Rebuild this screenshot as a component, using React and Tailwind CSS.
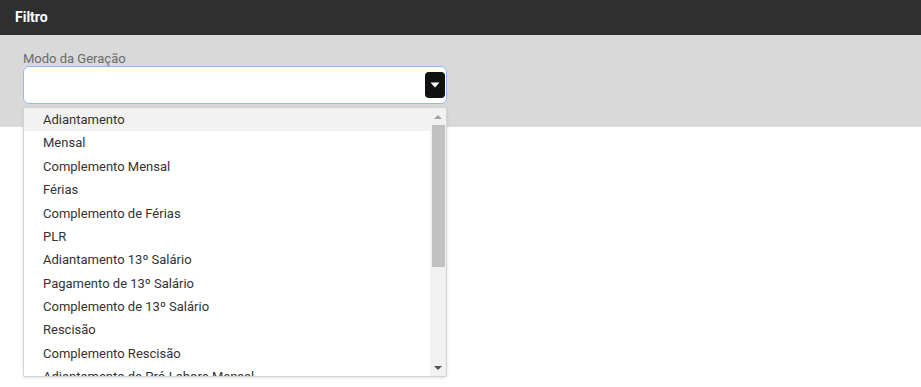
import React from 'react';

const options = [
  'Adiantamento',
  'Mensal',
  'Complemento Mensal',
  'Férias',
  'Complemento de Férias',
  'PLR',
  'Adiantamento 13º Salário',
  'Pagamento de 13º Salário',
  'Complemento de 13º Salário',
  'Rescisão',
  'Complemento Rescisão',
  'Adiantamento de Pró-Labore Mensal',
];

function App() {
  return (
    <div className="min-h-[387px] bg-white font-['Roboto',sans-serif]">
      {/* Cabeçalho */}
      <div className="h-[35px] bg-[#2f2f2f] px-[15px] flex items-center">
        <span className="text-[14px] font-bold text-white">Filtro</span>
      </div>

      {/* Filtro */}
      <div className="h-[92px] bg-[#d9d9d9] pl-[23px] pt-[16px]">
        <div className="relative w-[424px]">
          <label className="block text-[13px] leading-[15px] text-[#6b6b6b]">Modo da Geração</label>
          <div className="h-[38px] bg-white border border-[#8fbcf5] rounded-[6px] flex items-center justify-end pr-[1px]">
            <button type="button" className="w-[20px] h-[26px] bg-[#111] rounded-[4px] flex items-center justify-center">
              <svg width="10" height="6" viewBox="0 0 10 6">
                <path d="M0.5 0.5h9L5 5.5z" fill="#fff" />
              </svg>
            </button>
          </div>

          {/* Lista de opções */}
          <div className="absolute left-0 top-[56px] w-[424px] h-[270px] bg-white border border-[#d4d4d4] rounded-[2px] shadow-[0_1px_3px_rgba(0,0,0,0.12)] flex overflow-hidden">
            <ul className="flex-1 overflow-hidden">
              {options.map((opt, i) => (
                <li
                  key={opt}
                  className={
                    i === 0
                      ? 'h-[23.4px] flex items-center pl-[19px] text-[13px] text-[#333] bg-[#f2f2f3]'
                      : 'h-[23.4px] flex items-center pl-[19px] text-[13px] text-[#333]'
                  }
                >
                  {opt}
                </li>
              ))}
            </ul>
            {/* Barra de rolagem */}
            <div className="w-[16px] bg-[#f1f1f1] flex flex-col items-center">
              <div className="h-[17px] flex items-center justify-center">
                <svg width="8" height="4" viewBox="0 0 8 4"><path d="M0 4L4 0L8 4z" fill="#a3a3a3" /></svg>
              </div>
              <div className="w-[13px] h-[142px] bg-[#c1c1c1]" />
              <div className="flex-1" />
              <div className="h-[17px] flex items-center justify-center">
                <svg width="8" height="4" viewBox="0 0 8 4"><path d="M0 0L8 0L4 4z" fill="#505050" /></svg>
              </div>
            </div>
          </div>
        </div>
      </div>
    </div>
  );
}

export default App;
